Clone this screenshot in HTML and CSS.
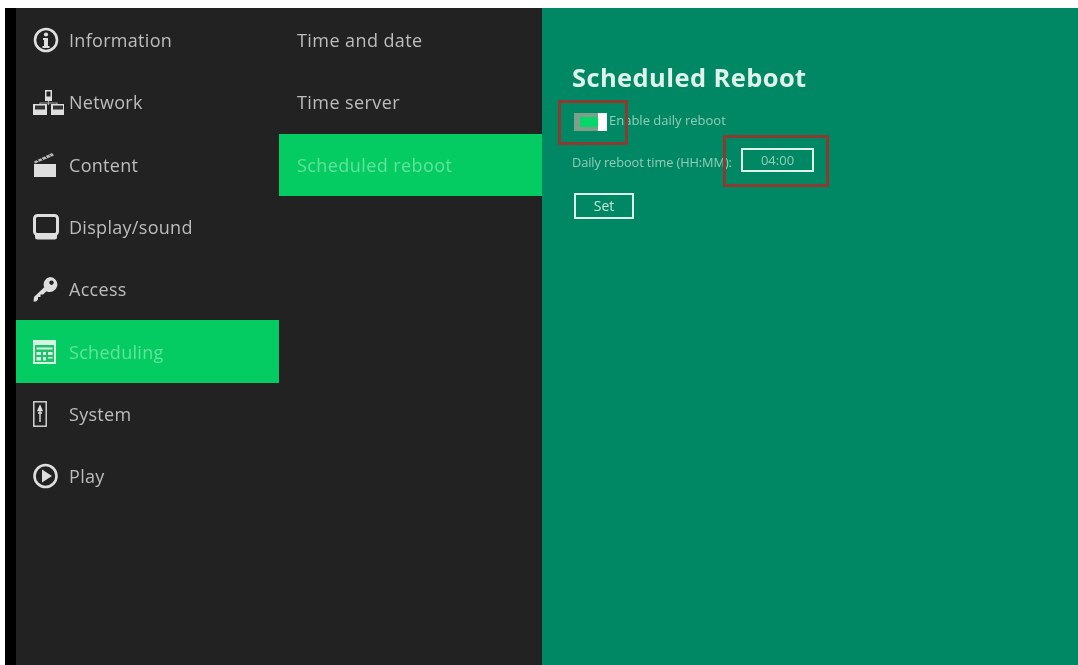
FILE: index.html
```html
<!DOCTYPE html>
<html lang="en">
<head>
<meta charset="utf-8">
<title>Scheduled Reboot</title>
<link rel="stylesheet" href="styles.css">
</head>
<body>
<div class="screen">
  <nav class="menu">
    <a class="item"><span class="ico"><svg width="26" height="26" viewBox="0 0 26 26"><circle cx="13" cy="13" r="11" fill="none" stroke="currentColor" stroke-width="2.600"/><circle cx="13" cy="7.500" r="2.100" fill="currentColor"/><path d="M10 11h5v8h1.500v2h-7v-2H11v-6h-1z" fill="currentColor"/></svg></span><span>Information</span></a>
    <a class="item"><span class="ico"><svg width="31" height="26" viewBox="0 0 31 26"><path d="M15.500 12v4M7 16v-2h17v2" fill="none" stroke="currentColor" stroke-width="1.200" opacity=".7"/><path d="M12 1h7v11h-7zM13.500 2.500v5h4v-5z" fill="currentColor" fill-rule="evenodd"/><path d="M0 15h14v11H0zM18 15h14v11H18z" fill="currentColor"/><path d="M2 16.500h10v4H2zM20 16.500h10v4H20z" fill="#333"/></svg></span><span>Network</span></a>
    <a class="item"><span class="ico"><svg width="24" height="26" viewBox="0 0 24 26"><path d="M1 12h22v13H1z" fill="currentColor"/><path d="M1 9.500 19 1l2 2.500L2 11.500z" fill="currentColor" opacity=".8"/><path d="M4 8 6 9.500M8 6l2 2M12 4l2 2M16 2.500l2 2" stroke="#222" stroke-width="1"/></svg></span><span>Content</span></a>
    <a class="item"><span class="ico"><svg width="26" height="26" viewBox="0 0 26 26"><rect x="1.500" y="1.500" width="23" height="19" rx="3" fill="none" stroke="currentColor" stroke-width="3"/><path d="M2 20h22v3a2.500 2.500 0 0 1-2.500 2.500h-17A2.500 2.500 0 0 1 2 23z" fill="currentColor"/></svg></span><span>Display/sound</span></a>
    <a class="item"><span class="ico"><svg width="25" height="26" viewBox="0 0 25 26"><path d="M17 1a7.500 7.500 0 1 1-3.500 14.200L10 18.500H7.500V21H5v2.500L3 25.500H.5L1 21l10.200-9.800A7.500 7.500 0 0 1 17 1zM18.500 4.500a2.200 2.200 0 1 0 .01 0z" fill="currentColor" fill-rule="evenodd"/></svg></span><span>Access</span></a>
    <a class="item active"><span class="ico"><svg width="23" height="25" viewBox="0 0 23 25"><path d="M0 1h23v24H0z" fill="#d4f5e2"/><path d="M2 6h19v17H2z" fill="#1fc06a"/><path d="M3.500 8.500h16v2h-16zM3.500 13h4.500v3H3.500zM10 13h3v3h-3zM15 13h4.500v3H15zM3.500 18h4.500v3.500H3.500zM10 18h3v3.500h-3zM15 18h4.500v1.500H15z" fill="#d4f5e2"/></svg></span><span>Scheduling</span></a>
    <a class="item"><span class="ico"><svg width="14" height="26" viewBox="0 0 14 26"><rect x=".8" y=".8" width="12.400" height="24.400" fill="none" stroke="currentColor" stroke-width="1.400"/><path d="M7 5v16M5 9.500 7 5l2 4.500zM5 12h4" fill="currentColor" stroke="currentColor" stroke-width="1.400"/></svg></span><span>System</span></a>
    <a class="item"><span class="ico"><svg width="25" height="26" viewBox="0 0 25 26"><circle cx="12.500" cy="13" r="11" fill="none" stroke="currentColor" stroke-width="2.600"/><path d="M9 6.500 19 13 9 19.500z" fill="currentColor"/></svg></span><span>Play</span></a>
  </nav>
  <nav class="menu sub">
    <a class="item">Time and date</a>
    <a class="item">Time server</a>
    <a class="item active">Scheduled reboot</a>
  </nav>
  <main class="panel">
    <h1>Scheduled Reboot</h1>
    <div class="check-row">
      <span class="toggle"><span class="toggle-on"></span><span class="toggle-knob"></span></span>
      <span class="check-label">Enable daily reboot</span>
    </div>
    <div class="time-row">
      <span class="time-label">Daily reboot time (HH:MM):</span>
      <span class="time-input">04:00</span>
    </div>
    <button class="set">Set</button>
    <span class="mark mark-toggle"></span>
    <span class="mark mark-time"></span>
  </main>
</div>
</body>
</html>
```

FILE: styles.css
```css
* { box-sizing: border-box; }
html, body { margin: 0; height: 100%; background: #fff; overflow: hidden; }
.screen {
  margin: 8px 0 0 5px;
  height: 657px;
  display: flex;
  background: #000;
  padding-left: 11px;
  font-family: "Open Sans", sans-serif;
}
.menu {
  width: 263px;
  background: #222;
  padding-top: 1px;
  display: flex;
  flex-direction: column;
  flex: none;
}
.item {
  height: 62.300px;
  display: flex;
  align-items: center;
  padding-left: 53px;
  position: relative;
  color: #bdbdbd;
  font-size: 18px;
  letter-spacing: .3px;
  filter: blur(.6px);
}
.sub .item { padding-left: 18px; letter-spacing: .42px; }
.item.active { background: #05cc62; color: #62e39b; }
.ico {
  position: absolute;
  left: 17px;
  top: 50%;
  height: 26px;
  transform: translateY(-50%);
  display: flex;
  align-items: center;
  color: #dedede;
}
.active .ico { color: #d4f5e2; }
.panel {
  flex: 1;
  background: #008764;
  position: relative;
  padding: 52px 0 0 30px;
  color: #93cdb8;
  font-size: 12px;
}
h1 {
  margin: 0 0 17px;
  font-size: 25.500px;
  line-height: 35px;
  font-weight: 700;
  color: #dff3ec;
  letter-spacing: .4px;
  filter: blur(.5px);
}
.check-row { display: flex; align-items: center; gap: 2px; height: 20px; margin-left: 2px; font-size: 13px; filter: blur(.6px); }
.check-label { padding-bottom: 4px; }
.toggle { display: flex; width: 33px; height: 18px; background: #7f9f8d; padding: 4px 0 4px 6px; flex: none; }
.toggle-on { width: 18px; background: #05d868; }
.toggle-knob { width: 9px; margin: -4px 0; background: #fff; }
.time-row { display: flex; align-items: center; margin-top: 16px; height: 24px; filter: blur(.6px); }
.time-label { width: 169px; padding-top: 3px; font-size: 12.800px; letter-spacing: -.1px; white-space: nowrap; }
.time-input {
  width: 73px;
  height: 24px;
  border: 2px solid #dff3ec;
  display: flex;
  align-items: center;
  justify-content: center;
  font-size: 13px;
}
.set {
  display: block;
  margin: 21px 0 0 2px;
  width: 60px;
  height: 26px;
  padding: 0 0 2px;
  background: transparent;
  border: 2px solid #dff3ec;
  color: #c4e6da;
  font: 14px "Open Sans", sans-serif;
  filter: blur(.5px);
}
.mark { position: absolute; border: 3px solid #8f3a30; filter: blur(.4px); }
.mark-toggle { left: 16px; top: 92px; width: 70px; height: 45px; }
.mark-time { left: 181px; top: 127px; width: 106px; height: 52px; }
```
